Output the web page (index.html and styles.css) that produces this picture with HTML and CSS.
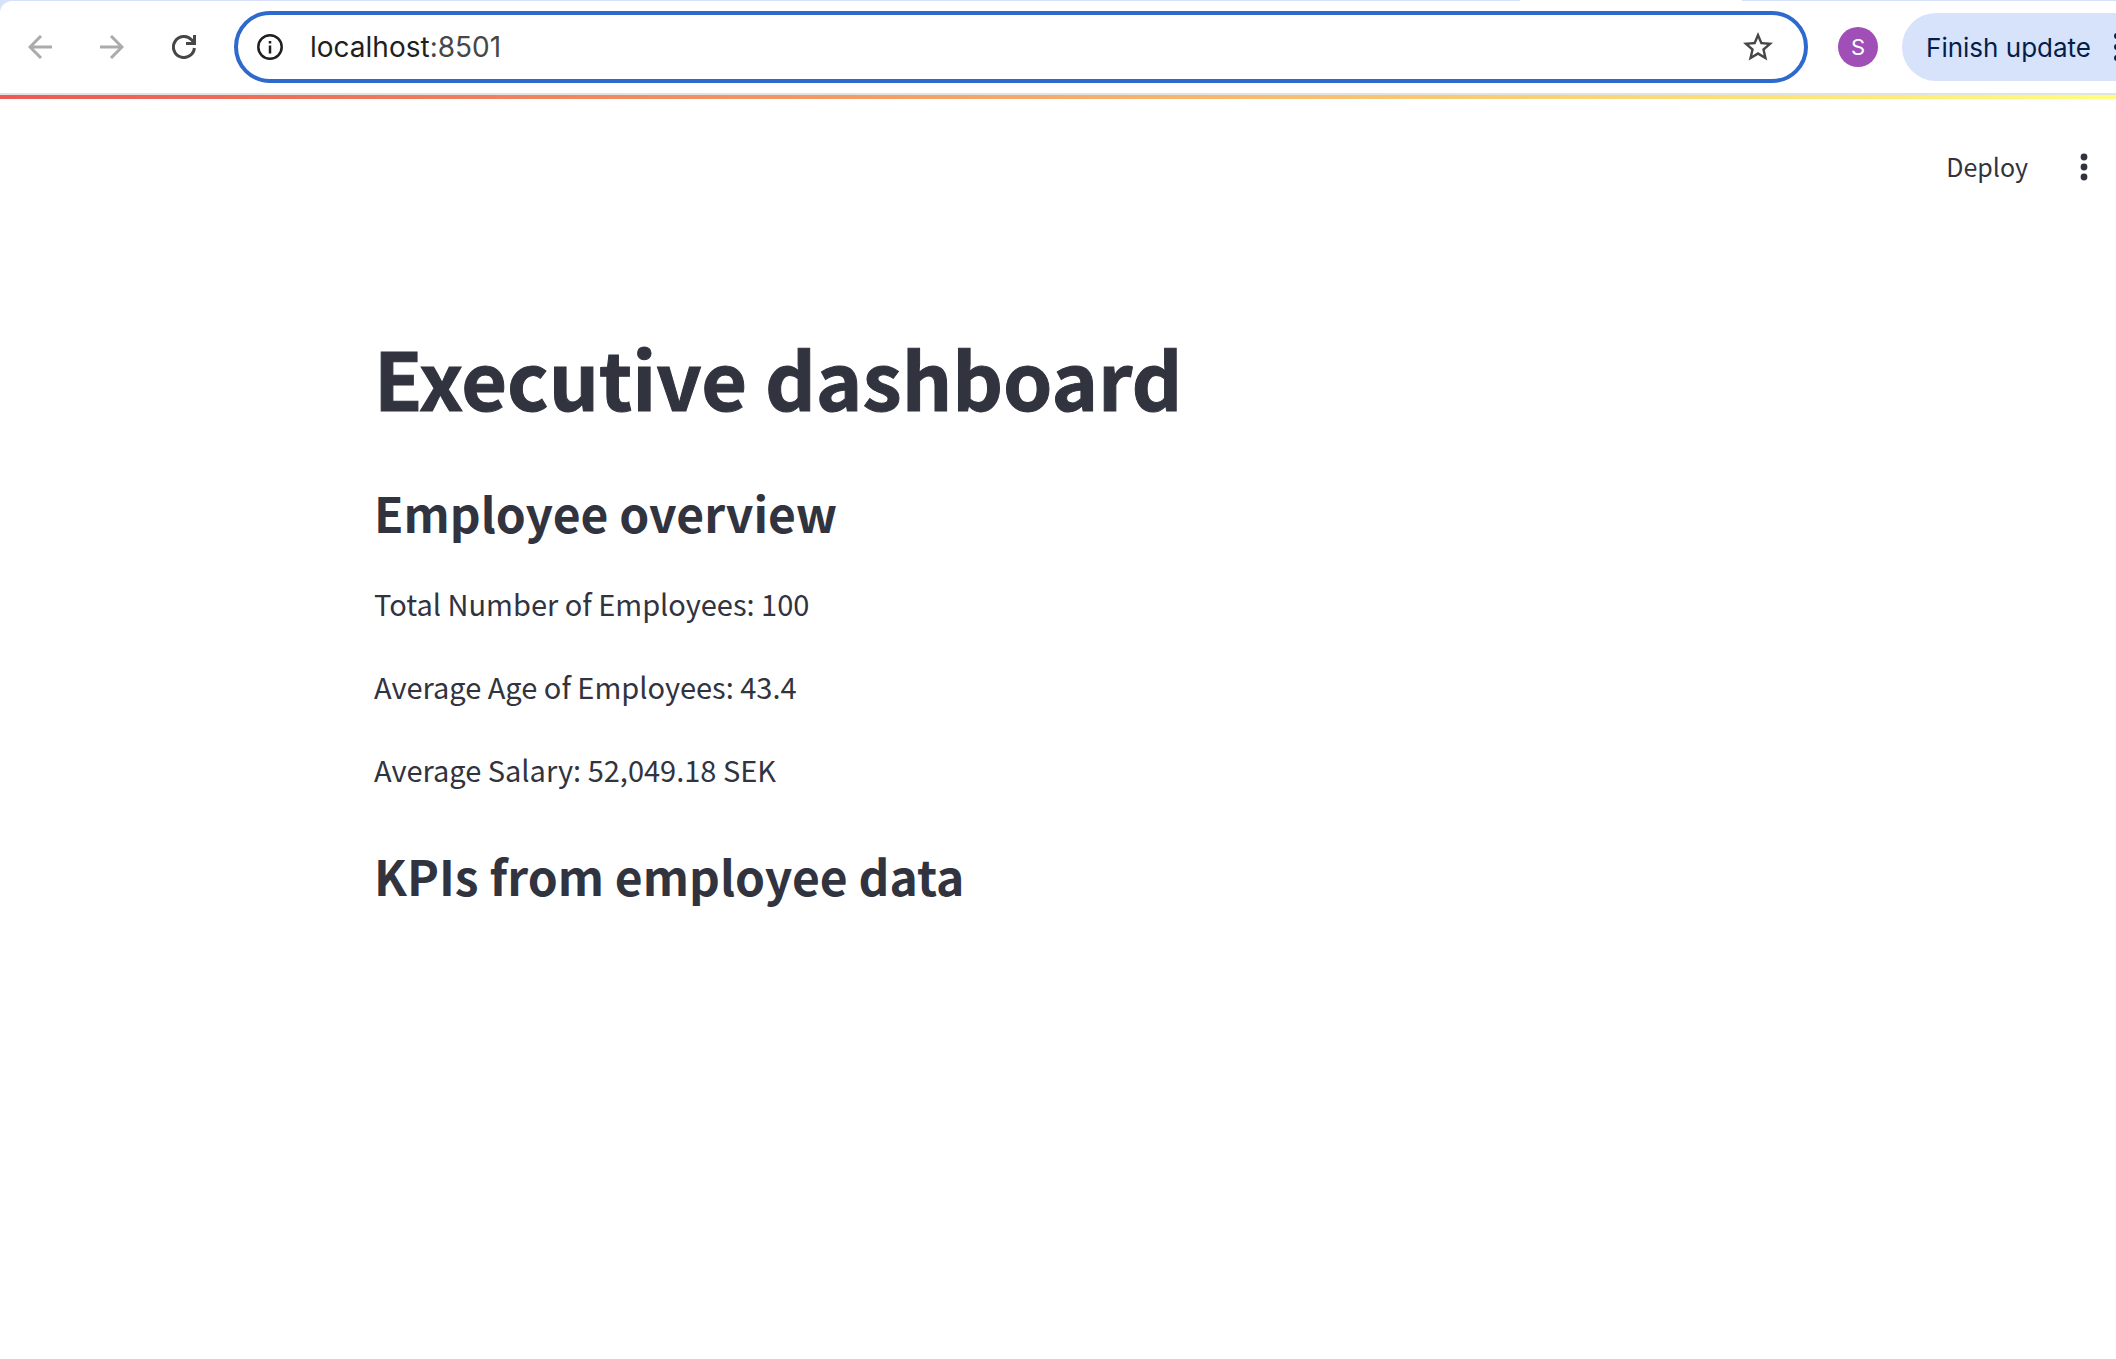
FILE: index.html
```
<!DOCTYPE html>
<html lang="en">
<head>
<meta charset="utf-8">
<title>Executive dashboard</title>
<link rel="stylesheet" href="styles.css">
</head>
<body>
<header class="browser">
  <div class="tabstrip"><div class="active-tab"></div></div>
  <div class="toolbar">
    <nav class="nav" aria-label="Browser navigation">
      <button class="icon-button" aria-label="Back" disabled><svg width="24" height="24" viewBox="0 0 24 24"><path d="M24 12H2M13 1L2 12l11 11"/></svg></button>
      <button class="icon-button" aria-label="Forward" disabled><svg width="24" height="24" viewBox="0 0 24 24"><path d="M0 12h22M11 1l11 11-11 11"/></svg></button>
      <button class="icon-button" aria-label="Reload"><svg width="24" height="24" viewBox="0 0 24 24"><path d="M22.400 13A10.500 10.500 0 1 1 19.500 4.700L22 7.500M22.500 0v8.500H14"/></svg></button>
    </nav>
    <form class="address">
      <button type="button" class="icon-button info" aria-label="Site information"><svg width="26" height="26" viewBox="0 0 26 26"><circle cx="13" cy="13" r="11.700"/><path d="M13 11.500v8M13 7v2.600"/></svg></button>
      <div class="url" role="textbox" tabindex="0" aria-label="Address">localhost<span class="port">:8501</span></div>
      <button type="button" class="icon-button star" aria-label="Bookmark"><svg width="36" height="36" viewBox="0 0 24 24"><path d="M22 9.240l-7.190-.62L12 2 9.190 8.630 2 9.240l5.460 4.730L5.820 21 12 17.270 18.180 21l-1.630-7.030L22 9.240zM12 15.400l-3.760 2.270 1-4.280-3.320-2.880 4.380-.38L12 6.100l1.710 4.040 4.380.38-3.320 2.880 1 4.280L12 15.400z"/></svg></button>
    </form>
    <button class="avatar" aria-label="Profile">S</button>
    <button class="update">Finish update<svg width="8" height="28" viewBox="0 0 8 28"><circle cx="4" cy="3" r="3"/><circle cx="4" cy="14" r="3"/><circle cx="4" cy="25" r="3"/></svg></button>
  </div>
</header>
<div class="decoration"></div>
<div class="app-header">
  <button class="deploy">Deploy</button>
  <button class="menu" aria-label="Main menu"><svg width="8" height="28" viewBox="0 0 8 28"><circle cx="4" cy="4" r="3.400"/><circle cx="4" cy="14" r="3.400"/><circle cx="4" cy="24" r="3.400"/></svg></button>
</div>
<main class="content">
  <h1>Executive dashboard</h1>
  <h2>Employee overview</h2>
  <p>Total Number of Employees: 100</p>
  <p>Average Age of Employees: 43.4</p>
  <p>Average Salary: 52,049.18 SEK</p>
  <h2>KPIs from employee data</h2>
</main>
</body>
</html>
```
FILE: styles.css
```
* { box-sizing: border-box; }
body {
  margin: 0;
  background: #fff;
  color: #31333f;
  font-family: "Noto Sans CJK SC", "Noto Sans", sans-serif;
  overflow-x: hidden;
}
button {
  margin: 0;
  padding: 0;
  border: 0;
  background: none;
  color: inherit;
  font: inherit;
}
svg { display: block; flex: none; }
.browser {
  background: #d6e2fb;
  border-bottom: 2px solid #e1e3e1;
  font-family: Inter, "Liberation Sans", sans-serif;
}
.tabstrip {
  display: flex;
  justify-content: flex-end;
  height: 1px;
  padding-right: 374px;
}
.active-tab { width: 222px; background: #fff; }
.toolbar {
  display: flex;
  align-items: center;
  height: 92px;
  padding-left: 28px;
  background: #fff;
  border-top-left-radius: 12px;
  overflow: hidden;
}
.nav { display: flex; gap: 48px; margin-right: 38px; }
.icon-button { flex: none; color: #474747; }
.icon-button:disabled { color: #ababab; }
.icon-button svg { fill: none; stroke: currentColor; stroke-width: 3; }
.icon-button.star svg { fill: currentColor; stroke: none; }
.icon-button.info { color: #1f1f1f; }
.address {
  display: flex;
  flex: 1;
  align-items: center;
  height: 72px;
  padding: 0 28px 0 19px;
  border: 4px solid #2e69cd;
  border-radius: 36px;
  color: #1f1f1f;
}
.url { flex: 1; margin-left: 27px; font-size: 28px; line-height: 36px; }
.port { color: #474747; }
.avatar {
  flex: none;
  width: 40px;
  height: 40px;
  margin: 0 24px 0 30px;
  border-radius: 50%;
  background: #a04fb7;
  color: #fff;
  font-size: 22px;
  line-height: 40px;
}
.update {
  display: flex;
  flex: none;
  align-items: center;
  gap: 22px;
  height: 68px;
  padding-left: 24px;
  margin-right: -5px;
  border-radius: 34px 0 0 34px;
  background: #d7e2fb;
  color: #041e49;
  font-size: 26px;
}
.info svg { stroke-width: 2.5; }
.update svg, .menu svg { fill: currentColor; }
.decoration { height: 4px; background: linear-gradient(90deg, #ec5953, #fffd80); }
.app-header {
  display: flex;
  align-items: center;
  justify-content: flex-end;
  gap: 52px;
  height: 136px;
  padding-right: 28px;
}
.deploy { padding-bottom: 2px; font-size: 25px; line-height: 40px; }
.content { padding: 90px 374px 0; }
h1, h2, p { margin: 0; }
h1 {
  margin-bottom: 35px;
  font-size: 79px;
  line-height: 104px;
  font-weight: 700;
  -webkit-text-stroke: 1px currentColor;
}
h2 { padding: 18px 0 36px; font-size: 48px; line-height: 60px; font-weight: 600; }
p { margin-bottom: 32px; font-size: 29px; line-height: 51px; }
```
